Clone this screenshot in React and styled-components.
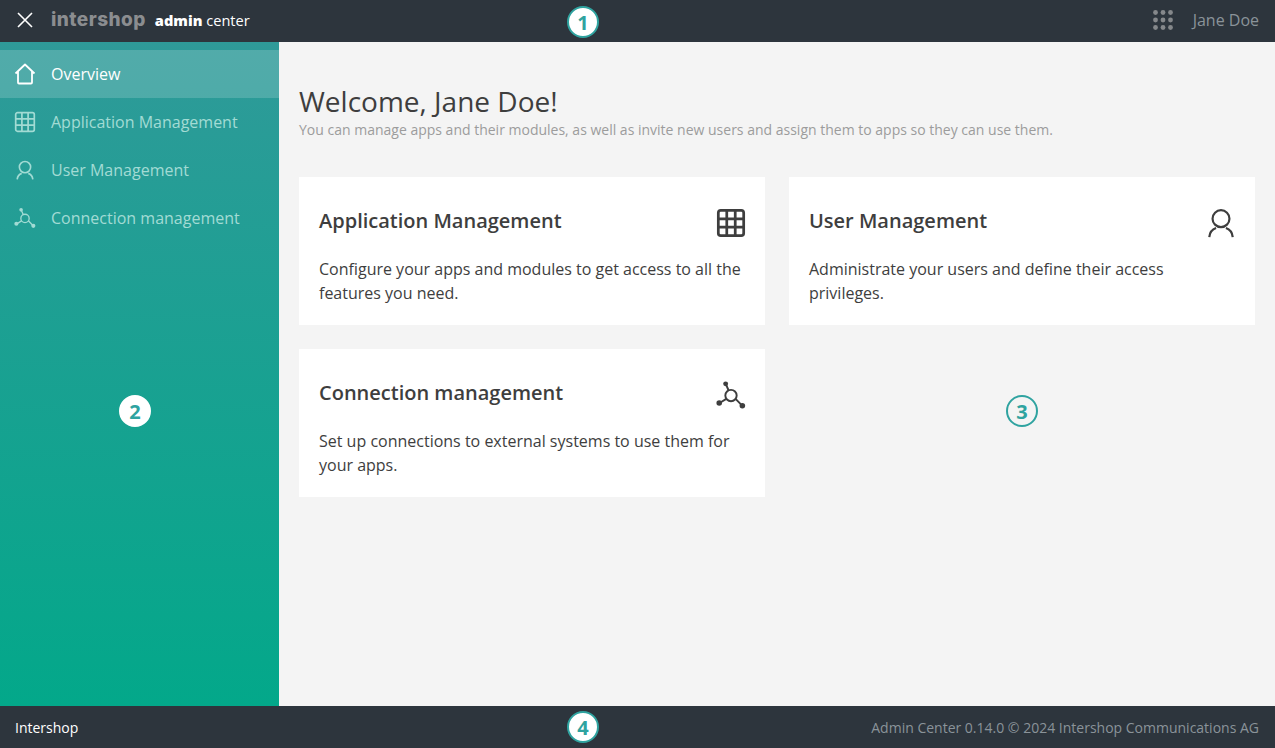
import React from 'react';
import styled, { createGlobalStyle } from 'styled-components';

const GlobalStyle = createGlobalStyle`
    html, body, #root {
        height: 100%;
    }
    body {
        margin: 0;
        font-family: "Open Sans", "Liberation Sans", sans-serif;
        background: #f4f4f4;
        overflow: hidden;
    }
`;

const CloseIcon = () => (
    <svg width="20" height="20" viewBox="0 0 20 20" fill="none" stroke="currentColor" strokeWidth="1.6">
        <path d="M3 3l14 14M17 3L3 17" />
    </svg>
);

const HomeIcon = ({ size = 22 }) => (
    <svg width={size} height={size} viewBox="0 0 22 22" fill="none" stroke="currentColor" strokeWidth="1.8" strokeLinejoin="round">
        <path d="M1.5 10.5L11 1.5l9.5 9M4 8.5V19.5a1 1 0 0 0 1 1h12a1 1 0 0 0 1-1V8.5" />
    </svg>
);

const GridIcon = ({ size = 22, weight = 1.7 }) => (
    <svg width={size} height={size} viewBox="0 0 22 22" fill="none" stroke="currentColor" strokeWidth={weight}>
        <rect x="1.7" y="1.7" width="18.6" height="18.6" rx="1.8" />
        <path d="M7.9 1.7v18.6M14.1 1.7v18.6M1.7 7.9h18.6M1.7 14.1h18.6" />
    </svg>
);

const UserIcon = ({ size = 20, weight = 1.8 }) => (
    <svg width={size} height={size} viewBox="0 0 22 22" fill="none" stroke="currentColor" strokeWidth={weight}>
        <circle cx="11" cy="7.8" r="6.2" />
        <path d="M2.4 21.3c.4-4 3.2-6 5-6.6M19.6 21.3c-.4-4-3.2-6-5-6.6" />
    </svg>
);

const NetworkIcon = ({ size = 22, weight = 1.7 }) => (
    <svg width={size} height={size} viewBox="0 0 28 28" fill="currentColor" stroke="currentColor" strokeWidth={weight}>
        <circle cx="14" cy="14.5" r="5.3" fill="none" />
        <path d="M11.8 9.8L9.5 4.5M9.6 17.6L4.5 20.8M18.3 17.6L23.5 23" fill="none" />
        <circle cx="9" cy="3.6" r="2.3" stroke="none" />
        <circle cx="3" cy="21.4" r="2.6" stroke="none" />
        <circle cx="24.6" cy="24" r="2.6" stroke="none" />
    </svg>
);

const DotsIcon = () => (
    <svg width="20" height="20" viewBox="0 0 20 20" fill="currentColor">
        {[2.5, 10, 17.5].map((y) =>
            [2.5, 10, 17.5].map((x) => <circle key={`${x}-${y}`} cx={x} cy={y} r="2.4" />)
        )}
    </svg>
);

const navItems = [
    { label: 'Overview', icon: <HomeIcon />, active: true },
    { label: 'Application Management', icon: <GridIcon /> },
    { label: 'User Management', icon: <UserIcon /> },
    { label: 'Connection management', icon: <NetworkIcon /> },
];

const cards = [
    {
        title: 'Application Management',
        text: 'Configure your apps and modules to get access to all the features you need.',
        icon: <GridIcon size={30} weight={2} />,
    },
    {
        title: 'User Management',
        text: 'Administrate your users and define their access privileges.',
        icon: <UserIcon size={30} weight={1.6} />,
    },
    {
        title: 'Connection management',
        text: 'Set up connections to external systems to use them for your apps.',
        icon: <NetworkIcon size={30} weight={1.8} />,
    },
];

export default function App() {
    return (
        <Page>
            <GlobalStyle />
            <Header>
                <HeaderLeft>
                    <CloseButton><CloseIcon /></CloseButton>
                    <Logo>intershop</Logo>
                    <Product><b>admin</b> center</Product>
                </HeaderLeft>
                <HeaderRight>
                    <AppsButton><DotsIcon /></AppsButton>
                    <UserName>Jane Doe</UserName>
                </HeaderRight>
                <Badge $variant="outlined" $x="583px" $y="22px">1</Badge>
            </Header>

            <Body>
                <Sidebar>
                    {navItems.map((item) => (
                        <NavItem key={item.label} $active={item.active}>
                            <NavIcon>{item.icon}</NavIcon>
                            {item.label}
                        </NavItem>
                    ))}
                    <Badge $variant="filled" $x="135px" $y="369px">2</Badge>
                </Sidebar>

                <Main>
                    <Title>Welcome, Jane Doe!</Title>
                    <Subtitle>You can manage apps and their modules, as well as invite new users and assign them to apps so they can use them.</Subtitle>
                    <CardGrid>
                        {cards.map((card) => (
                            <Card key={card.title}>
                                <CardHead>
                                    <CardTitle>{card.title}</CardTitle>
                                    <CardIcon>{card.icon}</CardIcon>
                                </CardHead>
                                <CardText>{card.text}</CardText>
                            </Card>
                        ))}
                    </CardGrid>
                    <Badge $variant="plain" $x="743px" $y="369px">3</Badge>
                </Main>
            </Body>

            <Footer>
                <FooterBrand>Intershop</FooterBrand>
                <Copyright>Admin Center 0.14.0 © 2024 Intershop Communications AG</Copyright>
                <Badge $variant="outlined" $x="583px" $y="21px">4</Badge>
            </Footer>
        </Page>
    );
}

const Page = styled.div`
    display: flex;
    flex-direction: column;
    height: 748px;
`;

const Header = styled.header`
    position: relative;
    display: flex;
    align-items: center;
    justify-content: space-between;
    flex: 0 0 42px;
    box-sizing: border-box;
    background: #2d353d;
    padding: 0 16px 2px 15px;
`;

const HeaderLeft = styled.div`
    display: flex;
    align-items: center;
`;

const CloseButton = styled.div`
    display: flex;
    width: 20px;
    color: #fff;
`;

const Logo = styled.span`
    margin-left: 16px;
    font-family: "Inter", sans-serif;
    font-size: 19px;
    font-weight: 800;
    line-height: 20px;
    letter-spacing: 0.45px;
    color: #8b8d90;
`;

const Product = styled.span`
    margin-left: 9px;
    font-size: 14.6px;
    color: #fff;
    b {
        font-weight: 800;
    }
`;

const HeaderRight = styled.div`
    display: flex;
    align-items: center;
`;

const AppsButton = styled.div`
    display: flex;
    color: #85888b;
`;

const UserName = styled.span`
    margin-left: 20px;
    font-size: 16px;
    color: #8a9399;
`;

const Body = styled.div`
    display: flex;
    flex: 1;
    min-height: 0;
`;

const Sidebar = styled.nav`
    position: relative;
    flex: 0 0 279px;
    padding-top: 8px;
    box-sizing: border-box;
    background: linear-gradient(180deg, #2f9a99 0%, #03a88a 100%);
`;

const NavItem = styled.div`
    display: flex;
    align-items: center;
    height: 48px;
    padding-left: 14px;
    font-size: 16px;
    color: ${(p) => (p.$active ? '#ffffff' : '#a2dbd4')};
    background: ${(p) => (p.$active ? 'rgba(255, 255, 255, 0.17)' : 'transparent')};
`;

const NavIcon = styled.span`
    display: flex;
    justify-content: center;
    width: 22px;
    margin-right: 15px;
`;

const Main = styled.main`
    position: relative;
    flex: 1;
    padding: 41px 20px 0;
`;

const Title = styled.h1`
    margin: 0 0 1px;
    font-size: 28px;
    font-weight: 400;
    line-height: 36px;
    color: #3e3e3e;
`;

const Subtitle = styled.p`
    margin: 0;
    font-size: 14px;
    line-height: 20px;
    color: #9c9c9c;
`;

const CardGrid = styled.div`
    display: grid;
    grid-template-columns: 466px 466px;
    grid-auto-rows: 148px;
    gap: 24px;
    margin-top: 37px;
`;

const Card = styled.section`
    padding: 27px 20px 0;
    background: #fff;
`;

const CardHead = styled.div`
    display: flex;
    align-items: center;
    justify-content: space-between;
    height: 32px;
`;

const CardTitle = styled.h2`
    margin: 0;
    font-size: 20px;
    font-weight: 600;
    color: #3e3e3e;
`;

const CardIcon = styled.span`
    display: flex;
    margin: 5px -1px 0 0;
    color: #3e3e3e;
`;

const CardText = styled.p`
    margin: 21px 0 0;
    font-size: 16px;
    line-height: 24px;
    color: #3e3e3e;
`;

const Footer = styled.footer`
    position: relative;
    display: flex;
    align-items: center;
    justify-content: space-between;
    flex: 0 0 42px;
    padding: 0 16px 0 15px;
    background: #2d353d;
`;

const FooterBrand = styled.span`
    font-size: 14px;
    color: #fff;
`;

const Copyright = styled.span`
    font-size: 14px;
    color: #8a9399;
`;

const Badge = styled.span`
    position: absolute;
    left: ${(p) => p.$x};
    top: ${(p) => p.$y};
    transform: translate(-50%, -50%);
    display: flex;
    align-items: center;
    justify-content: center;
    box-sizing: border-box;
    width: 32px;
    height: 32px;
    border-radius: 50%;
    font-family: "Open Sans", sans-serif;
    font-size: 20px;
    font-weight: 700;
    color: #2fa3a0;
    background: ${(p) => (p.$variant === 'plain' ? 'transparent' : '#fff')};
    border: 2px solid ${(p) => (p.$variant === 'filled' ? '#fff' : '#2fa3a0')};
`;
